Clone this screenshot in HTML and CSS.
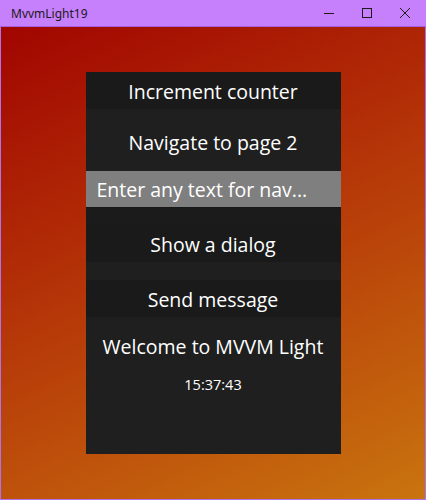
FILE: index.html
```html
<!DOCTYPE html>
<html>
<head>
<meta charset="utf-8">
<link rel="stylesheet" href="styles.css">
</head>
<body>
<div class="window">
  <div class="titlebar">
    <span class="title">MvvmLight19</span>
    <div class="controls">
      <span class="ctl"><svg width="10" height="10" viewBox="0 0 10 10"><path d="M0 5.5H10" stroke="#1a1a1a" stroke-width="1"/></svg></span>
      <span class="ctl"><svg width="10" height="10" viewBox="0 0 10 10"><rect x="0.5" y="0.5" width="9" height="9" fill="none" stroke="#1a1a1a" stroke-width="1"/></svg></span>
      <span class="ctl"><svg width="10" height="10" viewBox="0 0 10 10"><path d="M0 0L10 10M10 0L0 10" stroke="#1a1a1a" stroke-width="1"/></svg></span>
    </div>
  </div>
  <div class="content">
    <div class="panel">
      <div class="btn dark">Increment counter</div>
      <div class="btn nav">Navigate to page 2</div>
      <div class="textbox">Enter any text for nav...</div>
      <div class="strip"></div>
      <div class="btn dark">Show a dialog</div>
      <div class="btn dark send">Send message</div>
      <div class="welcome">Welcome to MVVM Light</div>
      <div class="clock">15:37:43</div>
    </div>
  </div>
</div>
</body>
</html>
```
FILE: styles.css
```css
html, body {
  margin: 0;
  padding: 0;
}
body {
  width: 426px;
  height: 500px;
  overflow: hidden;
  font-family: "Open Sans", "Noto Sans", sans-serif;
}
.window {
  width: 426px;
  height: 500px;
  display: flex;
  flex-direction: column;
  box-sizing: border-box;
}
.titlebar {
  height: 26px;
  background: #c680fb;
  border-bottom: 1px solid #a55fe0;
  display: flex;
  align-items: center;
  padding-left: 11px;
  flex: none;
}
.title {
  font-size: 12px;
  color: #1a1a1a;
  font-family: "Noto Sans", sans-serif;
}
.controls {
  margin-left: auto;
  display: flex;
  padding-right: 2px;
}
.ctl {
  width: 38px;
  height: 26px;
  display: flex;
  align-items: center;
  justify-content: center;
}
.content {
  flex: 1;
  border: 1px solid #b072ec;
  border-top: none;
  background: linear-gradient(155deg, #a10500 0%, #b53508 45%, #c9740f 100%);
  display: flex;
  align-items: center;
  justify-content: center;
}
.panel {
  width: 255px;
  height: 382px;
  background: #1f1f1f;
  display: flex;
  flex-direction: column;
  color: #fff;
}
.btn {
  height: 37px;
  box-sizing: border-box;
  padding-top: 2px;
  display: flex;
  align-items: center;
  justify-content: center;
  font-size: 19.5px;
  flex: none;
}
.dark {
  background: #1a1a1a;
}
.nav {
  margin-top: 14px;
}
.textbox {
  margin-top: 11px;
  height: 37px;
  background: #7f7f7f;
  border-bottom: 1px solid #171717;
  box-sizing: border-box;
  font-size: 19.5px;
  display: flex;
  align-items: center;
  padding-left: 11px;
  padding-top: 1px;
  flex: none;
}
.strip {
  height: 17px;
  background: #1b1b1b;
  flex: none;
}
.send {
  margin-top: 18px;
}
.welcome {
  margin-top: 17px;
  font-size: 19.5px;
  text-align: center;
  line-height: 26px;
}
.clock {
  margin-top: 15px;
  font-size: 14.5px;
  text-align: center;
  line-height: 20px;
}
```
